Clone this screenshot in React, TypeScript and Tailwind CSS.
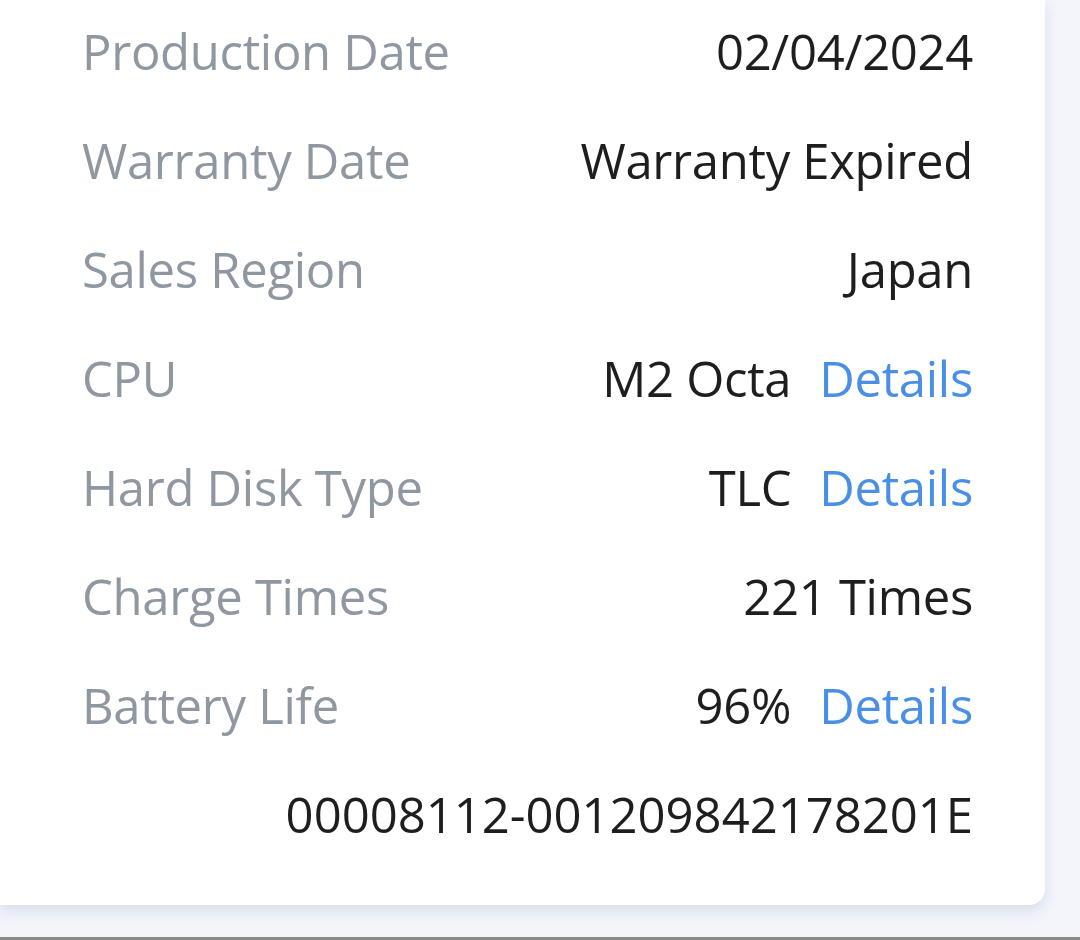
import React from "react";

type Row = { label: string; value: string; details?: boolean };

const rows: Row[] = [
  { label: "Production Date", value: "02/04/2024" },
  { label: "Warranty Date", value: "Warranty Expired" },
  { label: "Sales Region", value: "Japan" },
  { label: "CPU", value: "M2 Octa", details: true },
  { label: "Hard Disk Type", value: "TLC", details: true },
  { label: "Charge Times", value: "221 Times" },
  { label: "Battery Life", value: "96%", details: true },
];

export default function App() {
  return (
    <div
      className="w-[1080px] h-[940px] overflow-hidden bg-[#f3f5fa] flex flex-col"
      style={{ fontFamily: '"Open Sans", "Noto Sans", sans-serif' }}
    >
      <div className="flex-1 flex flex-col">
        <div className="w-[1045px] h-[905px] bg-white rounded-br-[16px] shadow-[0_6px_14px_rgba(200,214,232,0.7)] pl-[82px] pr-[72px]">
          <div className="flex flex-col -mt-[3px]">
            {rows.map((r) => (
              <div key={r.label} className="h-[109px] flex items-center justify-between text-[49px] tracking-[-0.3px]">
                <span className="text-[#8f97a1]">{r.label}</span>
                <span className="flex items-center text-[#1e1e1e]">
                  {r.value}
                  {r.details && <span className="ml-[28px] text-[#4a8fe6]">Details</span>}
                </span>
              </div>
            ))}
            <div className="h-[109px] flex items-center justify-end text-[49px] text-[#1e1e1e] tracking-[0px]">
              00008112-001209842178201E
            </div>
          </div>
        </div>
      </div>
      <div className="h-[3px] bg-[#8a8a8a]" />
    </div>
  );
}
